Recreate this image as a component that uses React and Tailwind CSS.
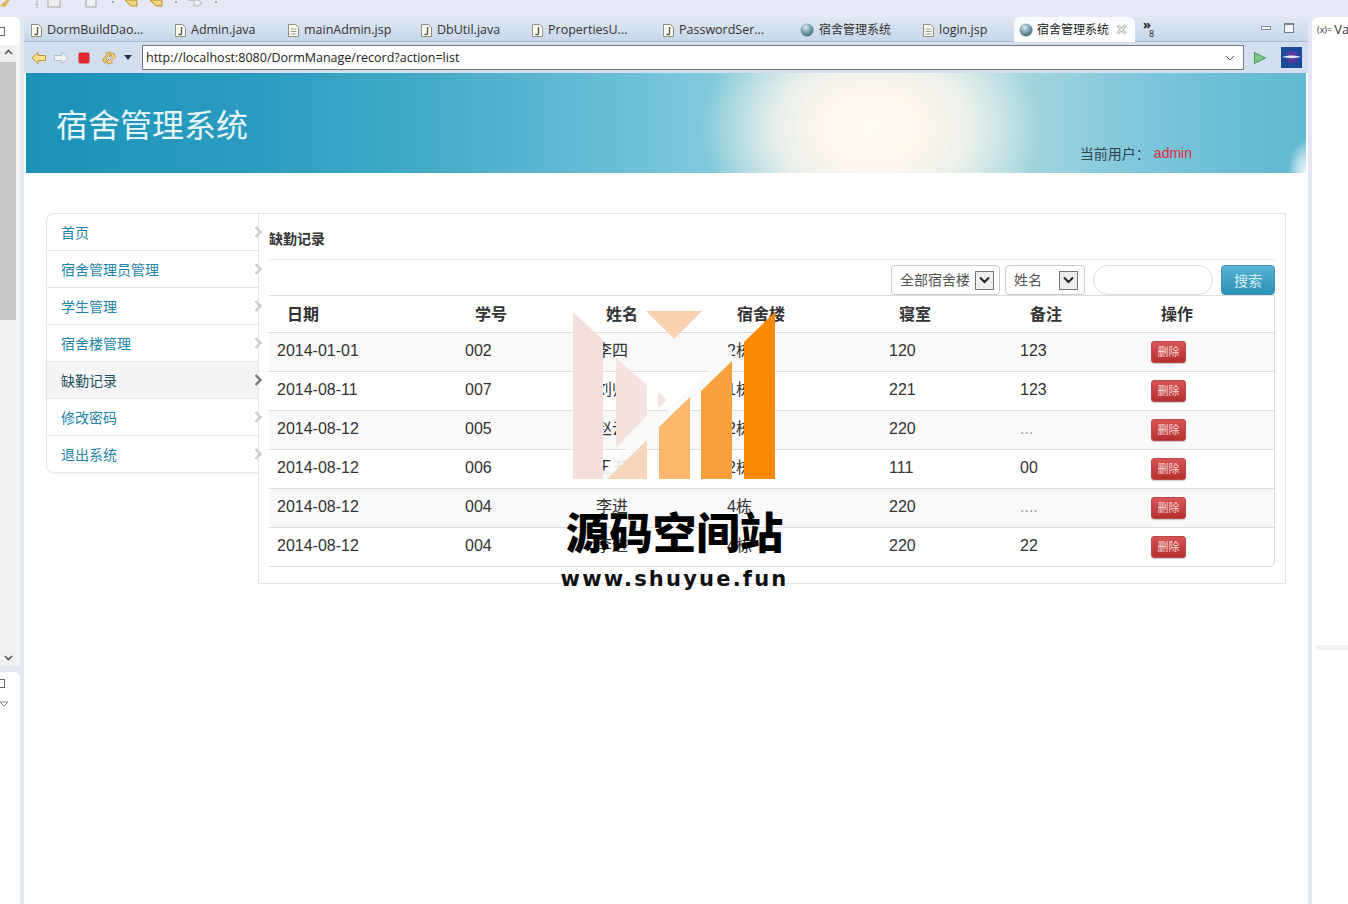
const sans = "font-[Liberation_Sans,Noto_Sans_CJK_SC,sans-serif]";
const ui = "[font-family:Open_Sans,Noto_Sans_CJK_SC,sans-serif]";
const cjk = "[font-family:Noto_Sans_CJK_SC,sans-serif]";

function JFile() {
  return (
    <svg width="13" height="15" viewBox="0 0 13 15" className="shrink-0">
      <path d="M1.5 1.5h7l3 3v9h-10z" fill="#fbfbf5" stroke="#8d8d80" />
      <path d="M7.5 4v6.2c0 1.6-2 1.8-3 .8" fill="none" stroke="#5b5b3c" strokeWidth="1.4" />
    </svg>
  );
}
function DocFile() {
  return (
    <svg width="13" height="15" viewBox="0 0 13 15" className="shrink-0">
      <path d="M1.5 1.5h7l3 3v9h-10z" fill="#fbfbf5" stroke="#8d8d80" />
      <path d="M3.5 6h6M3.5 8.5h6M3.5 11h6" stroke="#9a9a90" />
    </svg>
  );
}
function Globe({ id }) {
  return (
    <svg width="14" height="14" viewBox="0 0 14 14" className="shrink-0">
      <defs>
        <radialGradient id={id} cx="0.4" cy="0.3" r="0.8">
          <stop offset="0" stopColor="#dbe9ee" />
          <stop offset="0.55" stopColor="#6f98ab" />
          <stop offset="1" stopColor="#3c5f63" />
        </radialGradient>
      </defs>
      <circle cx="7" cy="7" r="6.5" fill={`url(#${id})`} />
    </svg>
  );
}

const tabs = [
  ["DormBuildDao...", "j", "w-[144px]"],
  ["Admin.java", "j", "w-[113px]"],
  ["mainAdmin.jsp", "d", "w-[133px]"],
  ["DbUtil.java", "j", "w-[111px]"],
  ["PropertiesU...", "j", "w-[131px]"],
  ["PasswordSer...", "j", "w-[138px]"],
  ["宿舍管理系统", "g", "w-[122px]"],
  ["login.jsp", "d", "w-[98px]"],
];

function TabBar() {
  return (
    <div className={`h-[25px] flex items-center rounded-t-md bg-[linear-gradient(#dfe8f3,#c7d7ea)] border-b border-[#a9bcd3] ${ui}`}>
      {tabs.map(([t, k, w], i) => (
        <div key={t} className={`${w} h-full pt-[2px] flex items-center gap-[4px] pl-[6px] text-[12.5px] text-[#333] whitespace-nowrap`}>
          {k === "j" && <JFile />}
          {k === "d" && <DocFile />}
          {k === "g" && <Globe id={`g${i}`} />}
          <span className={k === "g" ? "text-[12px] ml-[1px]" : "pt-[1px]"}>{t}</span>
        </div>
      ))}
      <div className="w-[121px] h-[26px] mt-[1px] flex items-center gap-[4px] pl-[5px] rounded-t-md bg-[linear-gradient(#f8fafd,#ffffff)] text-[12px] text-[#222] whitespace-nowrap">
        <Globe id="gActive" />
        <span>宿舍管理系统</span>
        <svg width="11" height="11" viewBox="0 0 11 11" className="ml-[3px]">
          <path d="M1.5 1.5 9.5 9.5M9.5 1.5 1.5 9.5" stroke="#8f8f8f" strokeWidth="2.6" />
          <path d="M1.5 1.5 9.5 9.5M9.5 1.5 1.5 9.5" stroke="#fff" strokeWidth="1.2" />
        </svg>
      </div>
      <div className="ml-[8px] w-[14px] h-[20px] relative text-[#222] leading-none">
        <span className="block text-[13px] font-bold leading-[10px]">»</span>
        <span className="block text-[9px] pl-[6px] leading-[10px]">8</span>
      </div>
      <div className="ml-auto flex items-center gap-[13px] pr-[14px] pb-[3px]">
        <div className="w-[10px] h-[4px] border border-[#7f8ea3] bg-white" />
        <div className="w-[10px] h-[10px] border border-[#6f7f94] border-t-2 bg-[#f3f6fa]" />
      </div>
    </div>
  );
}

function ToolBar() {
  return (
    <div className="h-[31px] flex items-center bg-[#d3dfee] pl-[7px] pr-[4px]">
      <svg width="16" height="14" viewBox="0 0 16 14" className="shrink-0">
        <path d="M1 7 7 1.5v3h7.5v5H7v3z" fill="#fbe28a" stroke="#b9902f" />
      </svg>
      <svg width="16" height="14" viewBox="0 0 16 14" className="shrink-0 ml-[6px]">
        <path d="M15 7 9 1.5v3H1.5v5H9v3z" fill="#f2f3f3" stroke="#b8bdc6" />
      </svg>
      <svg width="12" height="12" viewBox="0 0 12 12" className="shrink-0 ml-[9px]">
        <rect x="0.5" y="0.5" width="11" height="11" rx="2" fill="#e3272f" stroke="#c9898f" />
      </svg>
      <svg width="16" height="16" viewBox="0 0 16 16" className="shrink-0 ml-[11px]">
        <path d="M1.500 9 6 4.500 4.500 3 10 2 9 7 7.500 5.500 4.500 8.500 6 11 3.500 13z" fill="#f3c86e" stroke="#b98a35" strokeWidth="0.8" />
        <path d="M14.500 7 10 11.500 11.500 13 6 14 7 9 8.500 10.500 11.500 7.500 10 5 12.500 3z" fill="#f7d98f" stroke="#b98a35" strokeWidth="0.8" />
      </svg>
      <svg width="8" height="5" viewBox="0 0 8 5" className="shrink-0 ml-[7px]">
        <path d="M0 0h8L4 5z" fill="#333" />
      </svg>
      <div className={`ml-[10px] w-[1102px] h-[25px] flex items-center justify-between pl-[3px] pr-[8px] bg-white border border-[#77797d] text-[12.5px] text-[#222] ${ui}`}>
        <span className="pt-[1px]">http://localhost:8080/DormManage/record?action=list</span>
        <svg width="10" height="6" viewBox="0 0 10 6">
          <path d="M1 1 5 5 9 1" fill="none" stroke="#555" />
        </svg>
      </div>
      <svg width="14" height="14" viewBox="0 0 14 14" className="shrink-0 ml-[9px]">
        <path d="M1.500 1.500 12.500 7 1.500 12.500z" fill="#7fc48a" stroke="#3f9a52" />
      </svg>
      <svg width="21" height="21" viewBox="0 0 21 21" className="shrink-0 ml-[14px]">
        <rect width="21" height="21" fill="#1c4a9a" />
        <circle cx="11" cy="10" r="6" fill="#5a3a9c" />
        <path d="M1 10c6-2 13-2 19 0-6 1.500-13 1.500-19 0z" fill="#dfe6f5" />
      </svg>
    </div>
  );
}

function Banner() {
  return (
    <div className="relative h-[100px] mx-[2px] bg-[radial-gradient(ellipse_20px_34px_at_1282px_100px,#f2f8f9_0%,rgba(238,246,248,0.65)_50%,transparent_100%),radial-gradient(ellipse_170px_125px_at_845px_55px,#fffaf2_0%,#fff7ee_30%,rgba(255,246,238,0.75)_58%,rgba(255,240,228,0)_100%),linear-gradient(90deg,#1c92b8_0%,#2b9cc0_18%,#45abc9_32%,#6cc0d8_47%,#86cbdb_55%,#a9d9e1_62%,#b5dee2_72%,#9bd2dd_80%,#7fc6da_87%,#6bbed6_94%,#63b9d3_100%)]">
      <div className="h-full flex items-start justify-between pl-[30px] pr-[114px]">
        <div className={`pt-[28px] text-[32px] leading-[44px] text-[#e6f6fa] ${cjk}`}>宿舍管理系统</div>
        <div className={`pt-[70px] flex items-center text-[14px] leading-[20px] ${cjk}`}>
          <span className="text-[#2c4652] w-[74px]">当前用户：</span>
          <span className={`text-[#e02a3a] ${sans}`}>admin</span>
        </div>
      </div>
    </div>
  );
}

const nav = ["首页", "宿舍管理员管理", "学生管理", "宿舍楼管理", "缺勤记录", "修改密码", "退出系统"];

function Sidebar() {
  return (
    <div className={`w-[212px] h-[260px] shrink-0 rounded-l-lg border border-r-0 border-[#e5e5e5] bg-white shadow-[0_1px_2px_rgba(0,0,0,0.05)] ${cjk}`}>
      {nav.map((n, i) => {
        const active = i === 4;
        return (
          <div
            key={n}
            className={`relative h-[37px] flex items-center pl-[14px] text-[14px] ${i < 6 ? "border-b border-[#e5e5e5]" : ""} ${active ? "bg-[#f5f5f5] text-[#23505f]" : "text-[#1d84a8]"}`}
          >
            {n}
            <svg width="8" height="12" viewBox="0 0 8 12" className="absolute right-[-4px] top-[12px] z-10">
              <path d="M1.500 1 6.500 6 1.500 11" fill="none" stroke={active ? "#777" : "#ccc"} strokeWidth="2.4" />
            </svg>
          </div>
        );
      })}
    </div>
  );
}

const rows = [
  ["2014-01-01", "002", "李四", "2栋", "120", "123"],
  ["2014-08-11", "007", "刘帅", "1栋", "221", "123"],
  ["2014-08-12", "005", "赵云", "2栋", "220", "..."],
  ["2014-08-12", "006", "王五", "2栋", "111", "00"],
  ["2014-08-12", "004", "李进", "4栋", "220", "...."],
  ["2014-08-12", "004", "李进", "4栋", "220", "22"],
];
const heads = ["日期", "学号", "姓名", "宿舍楼", "寝室", "备注", "操作"];
const widths = ["w-[188px]", "w-[131px]", "w-[131px]", "w-[162px]", "w-[131px]", "w-[131px]", "w-[132px]"];

function Select({ label, w }) {
  return (
    <div className={`${w} h-[30px] flex items-center justify-between pl-[8px] border border-[#ccc] rounded-[4px] bg-white text-[14px] text-[#555]`}>
      <span className="pb-[2px]">{label}</span>
      <div className="w-[19px] h-[19px] flex items-center justify-center border border-[#777] bg-[#eee]">
        <svg width="11" height="8" viewBox="0 0 11 8">
          <path d="M1 1.500 5.500 6 10 1.500" fill="none" stroke="#222" strokeWidth="2" />
        </svg>
      </div>
    </div>
  );
}

function Main() {
  return (
    <div className="w-[1028px] h-[371px] border border-[#e5e5e5] px-[10px] bg-white">
      <div className={`h-[46px] pt-[14px] border-b border-[#e5e5e5] text-[14px] leading-[20px] font-bold text-[#333] ${cjk}`}>缺勤记录</div>
      <div className={`h-[35px] pt-[5px] flex justify-end gap-[5px] ${cjk}`}>
        <Select label="全部宿舍楼" w="w-[109px] pr-[5px]" />
        <Select label="姓名" w="w-[80px] pr-[6px]" />
        <div className="w-[120px] h-[30px] ml-[3px] rounded-full border border-[#ddd] bg-white" />
        <div className="w-[54px] h-[30px] ml-[3px] rounded-[4px] flex items-center justify-center text-[14px] text-[#d9f0f6] bg-[linear-gradient(#55b4d2,#2f8fb6)] border border-[#3b94b5]">搜索</div>
      </div>
      <div className="border-t border-r border-b border-[#ddd] rounded-br-md overflow-hidden">
        <table className={`w-[1005px] table-fixed border-collapse text-[16px] text-[#333] ${sans}`}>
          <thead>
            <tr className="h-[36px]">
              {heads.map((h, i) => (
                <th key={h} className={`${widths[i]} pl-[18px] pb-[2px] text-left font-bold align-middle ${cjk}`}>{h}</th>
              ))}
            </tr>
          </thead>
          <tbody>
            {rows.map((r, i) => (
              <tr key={i} className={`h-[39px] border-t border-[#ddd] ${i % 2 === 0 ? "bg-[#f9f9f9]" : "bg-white"}`}>
                {r.map((c, j) => (
                  <td key={j} className={`align-top pl-[8px] pt-[8px] leading-[20px] ${c[0] === "." ? "text-[#999]" : ""}`}>{c}</td>
                ))}
                <td className="align-top pl-[8px] pt-[8px]">
                  <div className={`w-[35px] h-[22px] rounded-[3px] flex items-center justify-center text-[11px] text-[#f6dcdc] bg-[linear-gradient(#d95555,#b52f2f)] border border-[#b84a4a] shadow-[0_1px_1px_rgba(0,0,0,0.2)] ${cjk}`}>删除</div>
                </td>
              </tr>
            ))}
          </tbody>
        </table>
      </div>
    </div>
  );
}

function Watermark() {
  return (
    <div className="absolute left-[540px] top-[310px] w-[269px] h-[290px] z-20 flex flex-col items-center pointer-events-none">
      <svg width="270" height="172" viewBox="540 310 270 172" className="shrink-0">
        <polygon points="595,479 607,479 732,361 732,349" fill="#f8f9fa" opacity="0.9" />
        <polygon points="573,312 603,340 603,479 573,479" fill="#f4dfdc" />
        <polygon points="616,358 647,385 647,415 616,448" fill="#f5e3e2" />
        <polygon points="658,392 667,400 658,408" fill="#f5e3e2" />
        <polygon points="646,311 702,311 674,339" fill="#f9d2b0" />
        <polygon points="607,479 647,440 647,479" fill="#f8d6bc" />
        <polygon points="659,427 690,397 690,479 659,479" fill="#fdb76c" />
        <polygon points="701,391 732,361 732,479 701,479" fill="#f9a03e" />
        <polygon points="744,342 775,312 775,479 744,479" fill="#fb8a07" />
      </svg>
      <div className={`mt-[23px] text-[43.5px] leading-[52px] font-black text-black whitespace-nowrap ${cjk}`}>源码空间站</div>
      <div className="mt-[8px] text-[21px] leading-[28px] font-bold tracking-[2.2px] text-[#111] whitespace-nowrap [font-family:DejaVu_Sans,sans-serif]">www.shuyue.fun</div>
    </div>
  );
}

function TopStrip() {
  return (
    <div className="h-[17px] flex items-start overflow-hidden bg-[#e6e9f5]">
      <svg width="220" height="8" viewBox="0 0 220 8" className="shrink-0">
        <path d="M0 6 6 0h4L5 7z" fill="#e2b458" />
        <path d="M37 1v7M35 4h4" stroke="#9a9a9a" strokeDasharray="1 1" />
        <rect x="48" y="-3" width="12" height="10" fill="#eee" stroke="#a5a5a5" />
        <path d="M86 0v7h10V0" fill="#eef0f5" stroke="#a5a5a5" />
        <path d="M125 0l6 6h6V0z" fill="#f3d27c" stroke="#b9902f" />
        <path d="M150 0l6 6h6V0z" fill="#f3d27c" stroke="#b9902f" />
        <path d="M188 0h10l4 3-4 3h-4V0z" fill="#eef0f5" stroke="#b0b3ba" />
        <path d="M112 2h2M175 2h2M215 2h2" stroke="#666" />
      </svg>
    </div>
  );
}

function LeftPanel() {
  return (
    <div className="w-[20px] shrink-0 h-full flex flex-col">
      <div className="h-[649px] flex flex-col bg-[#f3f3f3] rounded-tr-md">
        <div className="h-[28px] bg-white rounded-tr-md flex items-center">
          <div className="w-[5px] h-[9px] border-y border-r border-[#666]" />
        </div>
        <div className="w-[16px] h-[17px] pb-[3px] flex items-center justify-center bg-[#f0f0f0]">
          <svg width="9" height="6" viewBox="0 0 9 6"><path d="M1 5 4.500 1.500 8 5" fill="none" stroke="#555" strokeWidth="1.6" /></svg>
        </div>
        <div className="w-[16px] h-[258px] bg-[#c8c8c8]" />
        <div className="w-[16px] flex-1 bg-[#f0f0f0]" />
        <div className="w-[16px] h-[17px] flex items-center justify-center bg-[#f0f0f0]">
          <svg width="9" height="6" viewBox="0 0 9 6"><path d="M1 1 4.500 4.500 8 1" fill="none" stroke="#555" strokeWidth="1.6" /></svg>
        </div>
      </div>
      <div className="flex-1 mt-[6px] bg-white rounded-tr-md pt-[7px]">
        <div className="w-[5px] h-[9px] border-y border-r border-[#666]" />
        <svg width="8" height="6" viewBox="0 0 8 6" className="mt-[13px]"><path d="M0 1h8L4 5z" fill="none" stroke="#888" /></svg>
      </div>
    </div>
  );
}

function RightPanel() {
  return (
    <div className="w-[36px] shrink-0 h-full bg-white rounded-tl-md ml-[4px] flex flex-col overflow-hidden">
      <div className={`h-[25px] pl-[5px] flex items-center whitespace-nowrap text-[13px] text-[#333] ${ui}`}>
        <span className="text-[9px] mr-[2px]">(x)=</span>Va
      </div>
      <div className="mt-[603px] ml-[4px] h-[5px] bg-[#f1f1f1]" />
    </div>
  );
}

export default function App() {
  return (
    <div className="relative w-[1348px] h-[904px] overflow-hidden bg-[#e3e6f3]">
      <TopStrip />
      <div className="h-[887px] flex">
        <LeftPanel />
        <div className="w-[1284px] ml-[4px] shrink-0 h-full bg-white rounded-t-md flex flex-col">
          <TabBar />
          <ToolBar />
          <Banner />
          <div className="flex items-start pt-[40px] pl-[22px]">
            <Sidebar />
            <Main />
          </div>
        </div>
        <RightPanel />
      </div>
      <Watermark />
    </div>
  );
}
